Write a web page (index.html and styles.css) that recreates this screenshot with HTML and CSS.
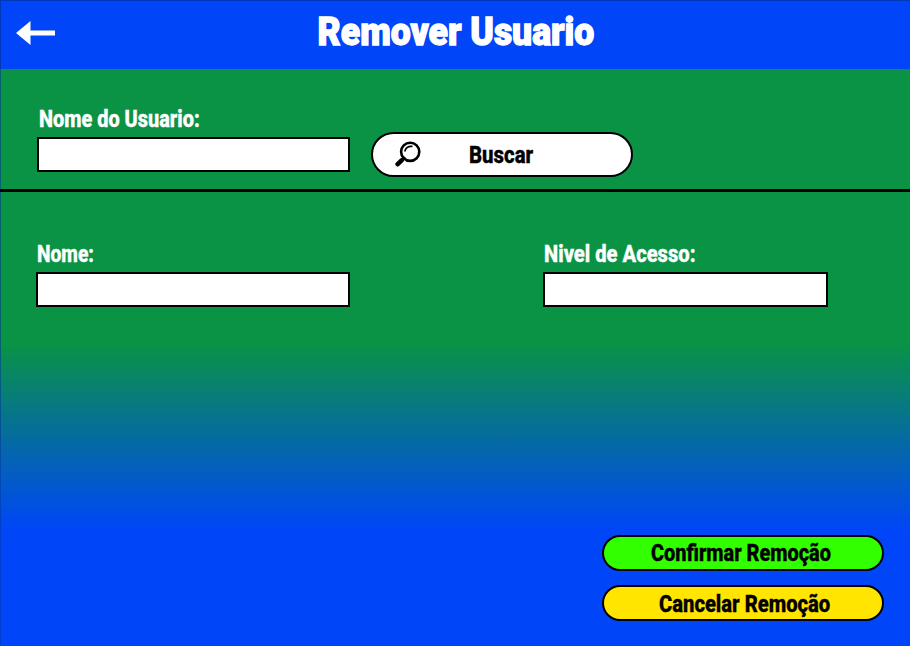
FILE: index.html
```html
<!DOCTYPE html>
<html lang="pt-BR">
<head>
<meta charset="utf-8">
<title>Remover Usuario</title>
<link rel="stylesheet" href="styles.css">
</head>
<body>
<div class="screen">
  <header class="header">
    <a class="back" href="#" aria-label="Voltar">
      <svg width="39" height="24" viewBox="0 0 39 24"><path fill="#fff" d="M0 12 14.5 0V9.5H39V14.5H14.5V24Z"/></svg>
    </a>
    <h1 class="title"><span>Remover Usuario</span></h1>
  </header>
  <main>
    <section class="search">
      <div class="field field-user">
        <label class="label" for="user"><span class="w-user">Nome do Usuario:</span></label>
        <input class="input" id="user" type="text">
      </div>
      <button class="button button-search" type="button">
        <svg class="lens" width="27" height="27" viewBox="0 0 27 27" fill="none" stroke="#000" stroke-linecap="round">
          <circle cx="15.2" cy="10.8" r="9.1" stroke-width="2.6"/>
          <path d="M10 9.8a5.8 5.8 0 0 1 6.8-4.4" stroke-width="1.7"/>
          <path d="M9 17 7 19" stroke-width="3"/>
          <path d="M6.6 19.4 2.7 23.2" stroke-width="4.6"/>
        </svg>
        <span class="w-search">Buscar</span>
      </button>
    </section>
    <section class="details">
      <div class="field field-name">
        <label class="label" for="name"><span class="w-name">Nome:</span></label>
        <input class="input" id="name" type="text">
      </div>
      <div class="field field-level">
        <label class="label" for="level"><span class="w-level">Nivel de Acesso:</span></label>
        <input class="input" id="level" type="text">
      </div>
    </section>
  </main>
  <footer class="actions">
    <button class="button confirm" type="button"><span class="w-confirm">Confirmar Remoção</span></button>
    <button class="button cancel" type="button"><span class="w-cancel">Cancelar Remoção</span></button>
  </footer>
</div>
</body>
</html>
```
FILE: styles.css
```css
* { box-sizing: border-box; }
body { margin: 0; font-family: Roboto, "Liberation Sans", sans-serif; font-weight: 800; }
.screen {
  height: 646px;
  display: flex;
  flex-direction: column;
  overflow: hidden;
  background: linear-gradient(#0a9345 343px, #0046f8 530px);
  box-shadow: inset 1px 1px #00339c80;
}
.header {
  height: 69px;
  display: grid;
  grid-template-columns: 55px 1fr 55px;
  background: #0046f8;
  border: solid #0037b4;
  border-width: 1px 0 0 1px;
}
.back { padding: 20px 0 0 15px; line-height: 0; }
.title { margin: 0; padding-left: 1px; font-size: 38px; font-weight: 900; line-height: 62px; color: #fff; text-align: center; }
.title span, .label span, .button span { display: inline-block; white-space: nowrap; }
.title span { transform: scaleX(.935); -webkit-text-stroke: 1.3px #fff; }
.search {
  height: 123px;
  display: flex;
  gap: 21px;
  padding: 36px 0 0 37px;
  border-bottom: 3px solid #000;
}
.details { display: flex; gap: 193px; padding: 48px 0 0 36px; }
.field { display: flex; flex-direction: column; }
.field-user { width: 313px; }
.field-name { width: 314px; }
.field-level { width: 285px; }
.label { height: 32px; padding-left: 1px; line-height: 28px; font-size: 24px; color: #fff; }
.label span, .button span { transform-origin: left; transform: scaleX(.83); -webkit-text-stroke: .4px; }
.label .w-user { margin-top: -1px; transform: translateX(1px) scaleX(.83); }
.label .w-name { transform: scaleX(.8); }
.label .w-level { transform: scaleX(.84); }
.button .w-search { transform: scaleX(.85); }
.button .w-cancel { transform: scaleX(.842); }
.input { width: 100%; height: 35px; border: 2px solid #000; background: #fff; border-radius: 0; padding: 0 8px; font: inherit; font-size: 20px; }
.button { display: flex; align-items: center; border: 2px solid #000; font: inherit; font-size: 24px; color: #000; padding: 0; }
.button-search { width: 262px; height: 45px; margin-top: 27px; padding-left: 22px; background: #fff; border-radius: 23px; }
.lens { margin-right: 47px; }
.actions { margin: auto 26px 25px auto; display: flex; flex-direction: column; gap: 15px; }
.confirm, .cancel { width: 282px; height: 36px; border-radius: 18px; }
.confirm { background: #32ff00; padding-left: 47px; margin-bottom: -.5px; }
.cancel { background: #ffe500; padding-left: 55px; }
.actions span { margin-top: 1px; }
```
